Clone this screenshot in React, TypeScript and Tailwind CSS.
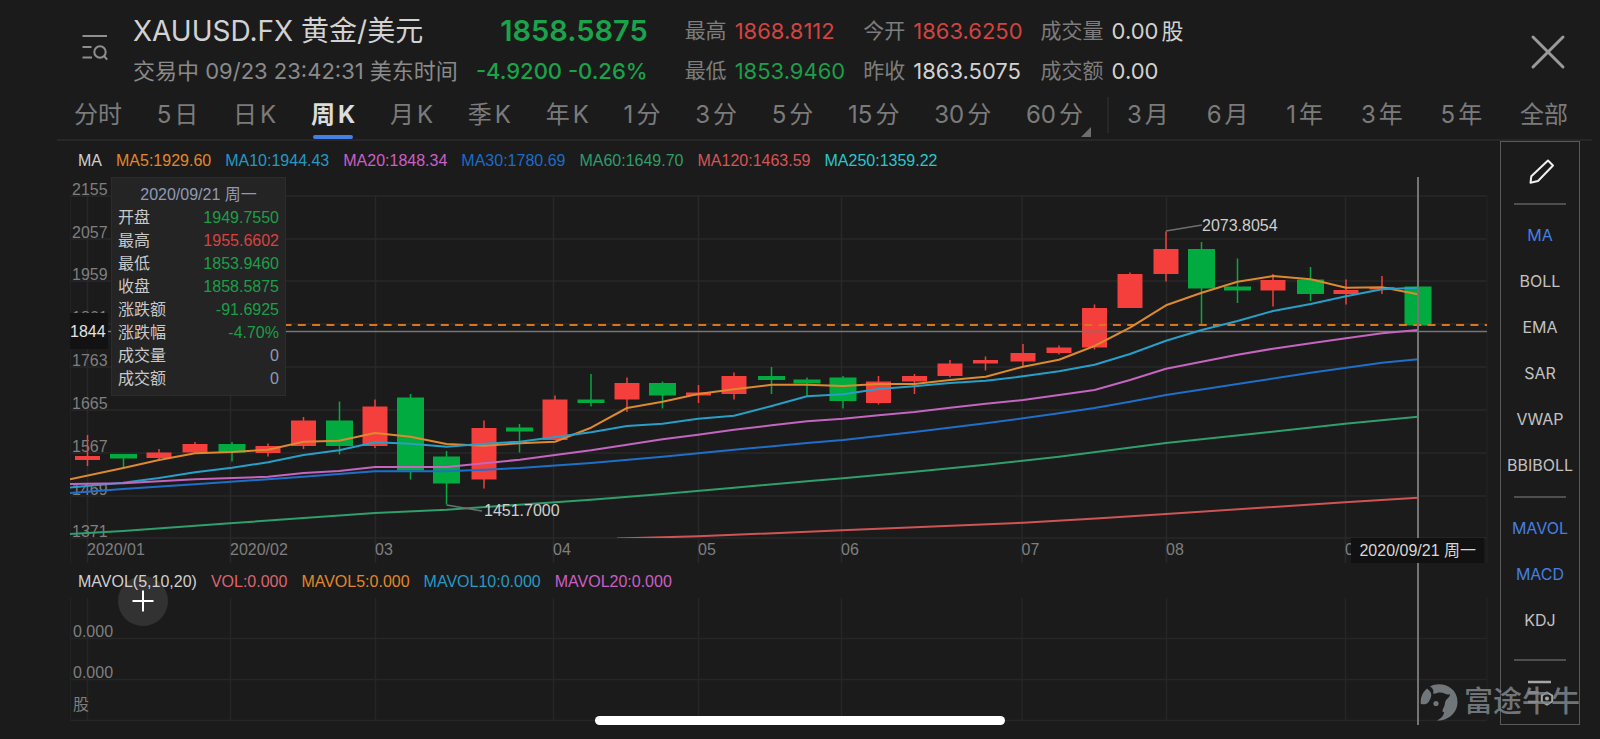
import { useState } from "react";

type Point = [number, number];
type Candle = [x: number, up: boolean, top: number, bottom: number, high: number, low: number];

const RED = "#f43f3c";
const GREEN = "#02ab3f";

// Chart geometry shares one coordinate system across the price and volume panes.
const candles: Candle[] = [
  [87.5, true, 456, 460, 435, 466],
  [123.5, false, 454, 458.5, 454, 467],
  [159, true, 452.5, 458, 449, 461],
  [195, true, 444, 452.5, 442, 453],
  [232, false, 444, 452.5, 442, 461.5],
  [268, true, 446, 453, 443.5, 456.5],
  [303.5, true, 420.5, 446, 417, 449],
  [339.5, false, 420.5, 446, 401.5, 454.5],
  [375, true, 406.5, 446, 399.5, 448],
  [410.5, false, 397.5, 470.5, 394, 479.5],
  [446.5, false, 456.5, 483.5, 451, 504.5],
  [484, true, 428, 479.5, 420.5, 488.5],
  [519.5, false, 427.5, 431.5, 424, 452.5],
  [555, true, 399.5, 440, 395.5, 440],
  [591, false, 399.5, 403, 374, 406.5],
  [627, true, 383, 399.5, 377.5, 412],
  [662.5, false, 383, 395.5, 381.5, 408.5],
  [698.5, true, 392.5, 395.5, 385, 403],
  [734, true, 376, 394, 372.5, 399.5],
  [771.5, false, 376, 380, 367, 394],
  [807, false, 379.5, 383.5, 377.5, 397],
  [843, false, 377.5, 401, 376, 408.5],
  [878.5, true, 381.5, 403, 376, 404.5],
  [914.5, true, 376, 381.5, 374, 394],
  [950, true, 363.5, 376, 360, 377.5],
  [985.5, true, 360, 363.5, 356.5, 370.5],
  [1023, true, 353, 361.5, 344, 366],
  [1059, true, 347.5, 353, 345.5, 354.5],
  [1094.5, true, 308, 347.5, 304.5, 349.5],
  [1130, true, 274, 308, 272.5, 308],
  [1166, true, 249, 274, 231.5, 281.5],
  [1201.5, false, 249, 288.5, 242, 324],
  [1237.5, false, 286.5, 290.5, 258.5, 303],
  [1273, true, 280, 290.5, 274, 306.5],
  [1310.5, false, 279.5, 294, 267, 301],
  [1346, true, 290, 294, 279.5, 304.5],
  [1382, true, 287, 289.5, 276, 294],
  [1418, false, 286.5, 325.5, 284, 325.5],
];

const averages: { color: string; points: Point[] }[] = [
  {
    color: "#dd8a2e",
    points: [
      [70, 479.3], [123.3, 468], [159, 460], [195, 453.3], [232, 452], [268, 449.7], [303.5, 441.7],
      [339, 440.7], [375, 433], [410.5, 436.7], [446.5, 444], [484, 445.7], [519.7, 443.3], [555, 441.7],
      [591, 427.7], [627, 408], [662.5, 401.7], [698, 394], [734, 389.3], [771.7, 384.7], [807, 384.7],
      [843, 386], [878.5, 384], [914.3, 384], [950, 380], [985.7, 376.7], [1023, 366.7], [1059, 359.7],
      [1094.5, 346], [1130, 327.7], [1166, 305.3], [1201.7, 292.7], [1237.5, 281.7], [1273, 276],
      [1310.7, 279.3], [1346, 287.7], [1382, 287.3], [1418, 294.3],
    ],
  },
  {
    color: "#279fc8",
    points: [
      [70, 487.5], [123, 482.7], [159, 478], [195, 472.3], [232, 467.7], [268, 462.3], [303.5, 455],
      [339, 450.3], [375, 442.3], [410.5, 443.7], [446.5, 446.7], [484, 443.7], [519.7, 441.7], [555, 437],
      [591, 432.3], [627, 426], [662.5, 423.7], [698, 418.7], [734, 415.7], [771.7, 406], [807, 396.3],
      [843, 394.3], [878.5, 389], [914.3, 386.3], [950, 383], [985.7, 380.7], [1023, 376.3], [1059, 371.3],
      [1094.5, 364.7], [1130, 354], [1166, 340.7], [1201.7, 330], [1237.5, 321], [1273, 311],
      [1310.7, 304], [1346, 296.3], [1382, 289.3], [1418, 287.7],
    ],
  },
  {
    color: "#c565c0",
    points: [
      [70, 484], [123, 483.3], [195, 479.3], [268, 476.7], [303.5, 473], [339, 471], [375, 467],
      [446.5, 467], [484, 463.3], [519.7, 459.7], [555, 455], [591, 450.3], [627, 444.7], [662.5, 439.3],
      [698, 434.7], [734, 429.7], [771.7, 425.3], [807, 421.3], [843, 418.7], [878.5, 415.3], [914.3, 412],
      [950, 407.7], [985.7, 403.7], [1023, 400], [1059, 395], [1094.5, 390], [1130, 380], [1166, 368.7],
      [1201.7, 361.7], [1237.5, 354.7], [1273, 348.7], [1310.7, 343.3], [1346, 338.3], [1382, 333.3],
      [1418, 330],
    ],
  },
  {
    color: "#1f6fc9",
    points: [
      [70, 493], [123, 489], [195, 484.3], [268, 479.3], [303.5, 476.7], [339, 474], [375, 471.3],
      [446.5, 471.3], [484, 469.7], [519.7, 468], [591, 463], [662.5, 456.7], [734, 449.7], [807, 443],
      [843, 440], [914.3, 432], [985.7, 423.3], [1059, 413.3], [1094.5, 408], [1130, 401.7], [1166, 395],
      [1237.5, 384], [1310.7, 372.7], [1382, 362.7], [1418, 359.3],
    ],
  },
  {
    color: "#2f9f6b",
    points: [
      [70, 534], [123, 531], [230, 523.3], [375, 513], [446.5, 509.7], [591, 499.7], [662.5, 494],
      [734, 487.7], [807, 481.3], [843, 478.3], [914.3, 471.7], [985.7, 464.7], [1059, 456.7],
      [1166, 443], [1270, 432], [1345, 423.7], [1418, 416.7],
    ],
  },
  {
    color: "#cf5455",
    points: [[617, 538.5], [698, 536.3], [842, 530.3], [1023, 522.7], [1100, 518.3], [1166, 514], [1345, 502.3], [1418, 497.7]],
  },
];

const priceTicks = [
  { label: "2155", y: 196 },
  { label: "2057", y: 239 },
  { label: "1959", y: 281 },
  { label: "1861", y: 324 },
  { label: "1763", y: 367 },
  { label: "1665", y: 410 },
  { label: "1567", y: 453 },
  { label: "1469", y: 496 },
  { label: "1371", y: 538 },
];

const monthTicks = [
  { label: "2020/01", x: 87.5 },
  { label: "2020/02", x: 230.5 },
  { label: "03", x: 375.5 },
  { label: "04", x: 553.5 },
  { label: "05", x: 698.5 },
  { label: "06", x: 841.5 },
  { label: "07", x: 1022 },
  { label: "08", x: 1166.5 },
  { label: "09", x: 1345.5 },
];

const periods = ["分时", "5日", "日K", "周K", "月K", "季K", "年K", "1分", "3分", "5分", "15分", "30分", "60分"];
const ranges = ["3月", "6月", "1年", "3年", "5年", "全部"];

const quotes = [
  [
    { label: "最高", value: "1868.8112", tone: "text-[#d24340]" },
    { label: "最低", value: "1853.9460", tone: "text-[#1c9e48]" },
  ],
  [
    { label: "今开", value: "1863.6250", tone: "text-[#d24340]" },
    { label: "昨收", value: "1863.5075", tone: "text-[#d2d2d2]" },
  ],
  [
    { label: "成交量", value: "0.00股", tone: "text-[#d2d2d2]" },
    { label: "成交额", value: "0.00", tone: "text-[#d2d2d2]" },
  ],
];

const maLegend = [
  { text: "MA", tone: "text-[#cfcfcf]" },
  { text: "MA5:1929.60", tone: "text-[#e0872a]" },
  { text: "MA10:1944.43", tone: "text-[#2499c4]" },
  { text: "MA20:1848.34", tone: "text-[#cc5fc4]" },
  { text: "MA30:1780.69", tone: "text-[#1c6cc8]" },
  { text: "MA60:1649.70", tone: "text-[#2f9c6a]" },
  { text: "MA120:1463.59", tone: "text-[#d65556]" },
  { text: "MA250:1359.22", tone: "text-[#2cc5cc]" },
];

const volLegend = [
  { text: "MAVOL(5,10,20)", tone: "text-[#cfcfcf]" },
  { text: "VOL:0.000", tone: "text-[#dc6470]" },
  { text: "MAVOL5:0.000", tone: "text-[#e0872a]" },
  { text: "MAVOL10:0.000", tone: "text-[#2499c4]" },
  { text: "MAVOL20:0.000", tone: "text-[#cc5fc4]" },
];

const details = [
  { label: "开盘", value: "1949.7550", tone: "text-[#1c9e48]" },
  { label: "最高", value: "1955.6602", tone: "text-[#d84240]" },
  { label: "最低", value: "1853.9460", tone: "text-[#1c9e48]" },
  { label: "收盘", value: "1858.5875", tone: "text-[#1c9e48]" },
  { label: "涨跌额", value: "-91.6925", tone: "text-[#1c9e48]" },
  { label: "涨跌幅", value: "-4.70%", tone: "text-[#1c9e48]" },
  { label: "成交量", value: "0", tone: "text-[#8f9bb5]" },
  { label: "成交额", value: "0", tone: "text-[#8f9bb5]" },
];

// Sets a small gap where Latin letters or digits meet Chinese characters.
function Mixed({ text }: { text: string }) {
  const parts = text.split(/([\dK.]+)/).filter(Boolean);
  return (
    <span className="inline-flex items-baseline gap-[3px]">
      {parts.map((part) => (
        <span key={part}>{part}</span>
      ))}
    </span>
  );
}

function Legend({ items }: { items: { text: string; tone: string }[] }) {
  return (
    <ul className="flex gap-[14px] whitespace-nowrap pl-2 text-base">
      {items.map((item) => (
        <li key={item.text} className={item.tone}>
          {item.text}
        </li>
      ))}
    </ul>
  );
}

function Header() {
  return (
    <header className="flex pl-20 pr-[34px] pt-[11px] font-['Inter','Noto_Sans_CJK_SC',sans-serif] whitespace-nowrap">
      <button type="button" aria-label="搜索列表" className="mt-[20px] h-8 w-8 shrink-0">
        <svg viewBox="0 0 32 32" className="h-8 w-8" fill="none" stroke="#8f8f8f" strokeWidth="2">
          <path d="M2.500 5H27M2.500 16H11.500M2.500 26.500H12" />
          <circle cx="20" cy="21" r="5.700" />
          <path d="M24 25l3.200 3.700" />
        </svg>
      </button>
      <div className="ml-[21px]">
        <h1 className="text-[28px] leading-10 text-[#d2d2d2]">XAUUSD.FX 黄金/美元</h1>
        <p className="text-[22px] leading-10 text-[#8a8a8a]">交易中 09/23 23:42:31 美东时间</p>
      </div>
      <div className="ml-[18px] text-right text-[#1aa34a]">
        <p className="text-[29px] leading-10 font-semibold">1858.5875</p>
        <p className="text-[22px] leading-10 font-medium">-4.9200 -0.26%</p>
      </div>
      <div className="ml-[37px] flex gap-[18px] leading-10">
        {quotes.map((column, i) => (
          <dl key={i}>
            {column.map((quote) => (
              <div key={quote.label} className="flex gap-2">
                <dt className="text-[21px] text-[#7d7d7d]">{quote.label}</dt>
                <dd className={quote.tone + " text-[22px]"}>
                  <Mixed text={quote.value} />
                </dd>
              </div>
            ))}
          </dl>
        ))}
      </div>
      <button type="button" aria-label="关闭" className="ml-auto mt-[23px] h-9 w-9 shrink-0">
        <svg viewBox="0 0 36 36" className="h-9 w-9" stroke="#9a9a9a" strokeWidth="3" strokeLinecap="round">
          <path d="M3 3L33 33M33 3L3 33" />
        </svg>
      </button>
    </header>
  );
}

function Periods() {
  const [active, setActive] = useState("周K");
  const tab = (name: string) => (
    <button
      key={name}
      type="button"
      aria-pressed={name === active}
      onClick={() => setActive(name)}
      className={
        name === active
          ? "relative h-12 pb-px font-bold text-[#dcdcdc]"
          : "relative h-12 pb-px text-[#7b7b7b]"
      }
    >
      <Mixed text={name} />
      {name === active && (
        <span className="absolute inset-x-0 bottom-0 mx-auto h-1 w-10 rounded-sm bg-[#4580e6]" />
      )}
      {name === "60分" && (
        <svg viewBox="0 0 10 10" className="absolute -right-2 bottom-0.5 h-[10px] w-[10px]" fill="#6e6e6e">
          <path d="M10 0V10H0Z" />
        </svg>
      )}
    </button>
  );
  return (
    <nav className="ml-[57px] mr-2 flex border-b-2 border-[#272727] pl-[17px] pr-6 text-[24px] leading-none font-['Inter','Noto_Sans_CJK_SC',sans-serif] whitespace-nowrap">
      <div className="flex flex-[1009_1_0%] justify-between">{periods.map(tab)}</div>
      <div className="mx-[18px] mt-1.5 ml-6 h-9 w-0.5 bg-[#272727]" />
      <div className="flex flex-[441_1_0%] justify-between">{ranges.map(tab)}</div>
    </nav>
  );
}

function PriceChart() {
  return (
    <svg viewBox="70 177 1420 387" className="block w-full" fontSize="16">
      <clipPath id="plot">
        <rect x="70" y="177" width="1417" height="361" />
      </clipPath>
      <g stroke="#282828" strokeWidth="1.500">
        {priceTicks.map((tick) => (
          <path key={tick.label} d={`M70 ${tick.y}H1487`} />
        ))}
        {monthTicks.map((tick) => (
          <path key={tick.label} d={`M${tick.x} 196V563`} />
        ))}
      </g>
      <path d="M70.500 196V563M1487 196V563" stroke="#222222" strokeWidth="1.500" />
      <g fill="#7f7f7f">
        {priceTicks.map((tick) => (
          <text key={tick.label} x="72" y={tick.y - 1}>
            {tick.label}
          </text>
        ))}
        {monthTicks.map((tick) => (
          <text key={tick.label} x={tick.x - 0.5} y="555">
            {tick.label}
          </text>
        ))}
      </g>
      {candles.map(([x, up, top, bottom, high, low]) => (
        <g key={x} fill={up ? RED : GREEN}>
          <rect x={x - 0.75} y={high} width="1.500" height={low - high} />
          <rect x={x - (up ? 12.5 : 13.5)} y={top} width={up ? 25 : 27} height={bottom - top} />
        </g>
      ))}
      <path d="M283.500 325H1487" stroke="#d9741f" strokeWidth="2" strokeDasharray="8 6.300" />
      <path d="M70 331.500H1487" stroke="#767676" strokeWidth="1.500" />
      <g fill="none" strokeWidth="2" strokeLinejoin="round" clipPath="url(#plot)">
        {averages.map((line) => (
          <polyline key={line.color} stroke={line.color} points={line.points.map((p) => p.join(",")).join(" ")} />
        ))}
      </g>
      <path d="M1166 231L1202 225M446.500 505L482 511" stroke="#6f6f6f" strokeWidth="1.500" />
      <g fill="#cfcfcf">
        <text x="1202" y="231">2073.8054</text>
        <text x="484" y="516">1451.7000</text>
      </g>
      <rect x="70" y="313" width="38" height="36" fill="#121212" />
      <text x="70" y="337" fill="#e2e2e2">
        1844
      </text>
    </svg>
  );
}

function VolumeChart() {
  return (
    <svg viewBox="70 598 1420 127" className="block w-full" fontSize="16">
      <g stroke="#262626" strokeWidth="1.500">
        <path d="M70 638.500H1487M70 679.500H1487M70 720.500H1487" />
        {monthTicks.map((tick) => (
          <path key={tick.label} d={`M${tick.x} 598V720`} />
        ))}
      </g>
      <path d="M70.500 598V720M1487 598V720" stroke="#222222" strokeWidth="1.500" />
      <g fill="#7f7f7f">
        <text x="73" y="637">0.000</text>
        <text x="73" y="678">0.000</text>
        <text x="73" y="710">股</text>
      </g>
    </svg>
  );
}

function DetailCard() {
  return (
    <section className="absolute left-[41px] top-9 w-[175px] border border-[#2c2c2c] bg-[#242424] px-1.5 pt-[5px] pb-[5px] text-base leading-[23px]">
      <h2 className="text-center text-[#8f9bb5]">2020/09/21 周一</h2>
      <dl>
        {details.map((row) => (
          <div key={row.label} className="flex justify-between">
            <dt className="text-[#c9c9c9]">{row.label}</dt>
            <dd className={row.tone}>{row.value}</dd>
          </div>
        ))}
      </dl>
    </section>
  );
}

function Sidebar() {
  const [enabled, setEnabled] = useState(["MA", "MAVOL", "MACD"]);
  const toggle = (name: string) =>
    setEnabled((list) => (list.includes(name) ? list.filter((n) => n !== name) : [...list, name]));
  const item = (name: string) => (
    <button
      key={name}
      type="button"
      aria-pressed={enabled.includes(name)}
      onClick={() => toggle(name)}
      className={enabled.includes(name) ? "block w-full py-[11px] text-[#467fe0]" : "block w-full py-[11px] text-[#c2c2c2]"}
    >
      {name}
    </button>
  );
  return (
    <aside className="flex w-20 shrink-0 flex-col items-center border border-[#5a5a5a] text-base leading-6 font-['Inter',sans-serif]">
      <button type="button" aria-label="画线" className="mt-[15px] h-8 w-8">
        <svg viewBox="0 0 32 32" className="h-8 w-8" fill="none" stroke="#f0f0f0" strokeWidth="2" strokeLinejoin="round">
          <path d="M24 3.500L29 8.500L14 24L6.500 25.800L7.300 19.300Z" />
        </svg>
      </button>
      <hr className="mt-[14px] w-[52px] border-t-2 border-[#4e4e4e]" />
      <div className="w-full pt-[7px] pb-2">{["MA", "BOLL", "EMA", "SAR", "VWAP", "BBIBOLL"].map(item)}</div>
      <hr className="w-[52px] border-t-2 border-[#4e4e4e]" />
      <div className="w-full pt-[7px] pb-4">{["MAVOL", "MACD", "KDJ"].map(item)}</div>
      <hr className="w-[52px] border-t-2 border-[#4e4e4e]" />
      <button type="button" aria-label="指标设置" className="mt-[16px] h-8 w-8">
        <svg viewBox="0 0 32 32" className="h-8 w-8" fill="none" stroke="#a6a6a6" strokeWidth="2.500">
          <path d="M4 5H27M4 15.500H14.500M4 25H14.500" />
          <path d="M23 15.500L28.200 18.500V24.500L23 27.500L17.800 24.500V18.500Z" strokeWidth="2" />
          <circle cx="23" cy="21.500" r="1" strokeWidth="2" />
        </svg>
      </button>
    </aside>
  );
}

function Watermark() {
  return (
    <div className="pointer-events-none absolute right-5 bottom-[18px] flex items-center gap-1.5 text-[#80868c]/85">
      <svg viewBox="0 0 38 38" className="h-[38px] w-[38px]" fill="currentColor">
        <path d="M10 3.500C20-2 37.500 3 37.500 19C37.500 30 28 38 17 37.500C22 35 24 32 24 29C20 29 25 24 25 20C26 15 30 15 30 11C27 13 24 9 19 9.500C17 10 15 11 13 10.500C14 8 13 5 10 3.500Z" />
        <path d="M0.800 21C0 14 3 9 7 5.500C10 8 12 10 11 14C10 17 9 19 7 20.500C5 21.500 3 21.500 0.800 21Z" />
        <circle cx="16" cy="20.500" r="2.600" />
      </svg>
      <span className="text-[29px] leading-[38px] font-medium">富途牛牛</span>
    </div>
  );
}

export default function App() {
  return (
    <div className="relative min-h-screen overflow-hidden bg-[#1b1b1b] font-['Liberation_Sans','Noto_Sans_CJK_SC',sans-serif]">
      <Header />
      <Periods />
      <main className="flex gap-2.5 pr-5 pl-[70px] pb-[14px]">
        <div className="relative min-w-0 flex-1">
          <div className="flex h-9 items-center pt-[3px]">
            <Legend items={maLegend} />
          </div>
          <PriceChart />
          <div className="flex h-[34px] items-center pt-0.5">
            <Legend items={volLegend} />
          </div>
          <VolumeChart />
          <div className="absolute top-9 bottom-0 left-[94.85%] w-0.5 bg-[#747474]" />
          <p className="absolute right-1.5 bottom-[162px] bg-[#111111] px-2 text-base leading-[25px] text-[#d6d6d6]">
            2020/09/21 周一
          </p>
          <DetailCard />
          <button
            type="button"
            aria-label="添加指标"
            className="absolute bottom-[99px] left-12 h-[50px] w-[50px] rounded-full bg-white/10"
          >
            <svg viewBox="0 0 50 50" className="h-[50px] w-[50px]" stroke="#ffffff" strokeWidth="2">
              <path d="M25 14.500V35.500M14.500 25H35.500" />
            </svg>
          </button>
        </div>
        <Sidebar />
      </main>
      <Watermark />
      <div className="absolute inset-x-0 bottom-[14px] mx-auto h-[9px] w-[410px] rounded-full bg-white" />
    </div>
  );
}
